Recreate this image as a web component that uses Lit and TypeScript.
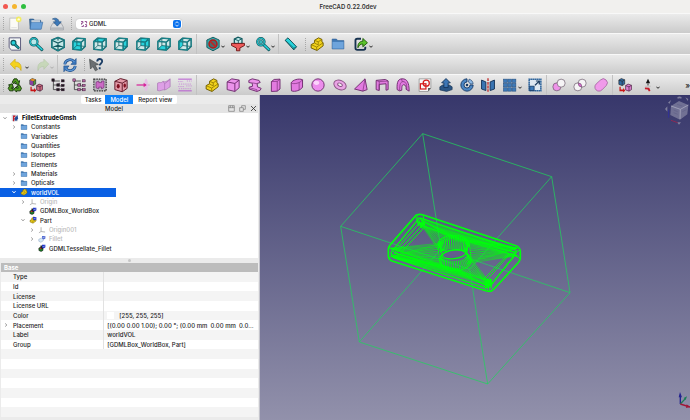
import { LitElement, html, svg, css, nothing } from "lit";
import { customElement, property } from "lit/decorators.js";
import { classMap } from "lit/directives/class-map.js";

type Pt = [number, number];

/* ---------- icon artwork, drawn on a 48 x 48 grid ---------- */

const TEAL = "#125a60";
const CYAN = "#27d3dc";
const PINK = "#ec92ea";
const PLUM = "#6d2a6d";

const cubeFaces: Record<string, string> = {
  front: "3,15 31,18 31,45 3,41",
  top: "3,15 17,4 45,6 31,18",
  right: "31,18 45,6 45,32 31,45",
  rear: "17,5 44,7 44,32 17,29",
  bottom: "3,41 17,29 45,32 31,45",
  left: "3,15 17,4 17,29 3,41",
};

const viewCube = (face: string) => svg`
  <polygon points="3,15 17,4 45,6 45,32 31,45 3,41" fill="#cfe8e8"/>
  <polygon points=${cubeFaces[face]} fill=${CYAN}/>
  <g fill="none" stroke=${TEAL} stroke-width="4.5" stroke-linejoin="round">
    <path d="M17 5v24L4 41M17 29l27 3" stroke-width="2.5"/>
    <path d="M4 15 17 5l27 2v25L31 44 4 41zM4 15l27 3 13-11M31 18v26"/>
  </g>
  <path d="M4 15 17 5l27 2v25L31 44 4 41zM4 15l27 3 13-11M31 18v26" fill="none" stroke="#1fa3ab" stroke-width="2"/>`;

const magnifier = svg`
  <path d="M26 26 43 42" stroke=${TEAL} stroke-width="10" stroke-linecap="round"/>
  <path d="M26 26 43 42" stroke=${CYAN} stroke-width="5" stroke-linecap="round"/>
  <circle cx="17" cy="17" r="12" fill="#b9e9ea" stroke=${TEAL} stroke-width="7"/>
  <circle cx="17" cy="17" r="12" fill="none" stroke=${CYAN} stroke-width="3"/>`;

const folder = svg`
  <path d="M5 8h14l4 5h20v27H5z" fill="#3f78b4" stroke="#2f5f95" stroke-width="2"/>
  <path d="M6 17h36v22H6z" fill="#6ea4dc"/>`;

const part = svg`
  <path d="M5 26 16 20v-8l13-8 11 5v8l4 3v10L24 45 5 37z" fill="#f2d21c" stroke="#6b5800" stroke-width="3" stroke-linejoin="round"/>
  <path d="M5 26l18 8 21-14M23 34v10M16 12l12 5 12-8M28 17v10l-12-6" fill="none" stroke="#8a7300" stroke-width="2.5"/>`;

const tree = (c: string) => svg`
  <path d="M9 11v28h14M9 24h14M30 11H9M28 17v10h10M28 39h10" fill="none" stroke="#333" stroke-width="2.5"/>
  <g fill=${c} stroke="#33132f" stroke-width="1.5"><rect x="4" y="4" width="8" height="8"/><rect x="20" y="20" width="8" height="8"/><rect x="35" y="7" width="9" height="7"/><rect x="35" y="22" width="9" height="7"/><rect x="20" y="35" width="8" height="8"/><rect x="35" y="36" width="9" height="7"/></g>`;

const miniBoxes = (a: string, b: string) => svg`
  <path d="M4 8l8-5 11 4v14l-8 5-11-4z" fill=${a} stroke="#222" stroke-width="2"/>
  <path d="M4 8l11 4 8-5M15 12v14" fill="none" stroke="#222" stroke-width="2"/>
  <path d="M26 26l8-5 11 4v14l-8 5-11-4z" fill=${b} stroke="#3a1030" stroke-width="2"/>
  <path d="M26 26l11 4 8-5M37 30v14" fill="none" stroke="#3a1030" stroke-width="2"/>
  <path d="M10 30v9h8v-5l7 8-7 6v-4H6V30z" fill="#c81414"/>`;

const icons: Record<string, unknown> = {
  file: svg`<path d="M7 5h28v38H7z" fill="#fbfbf6" stroke="#aaa" stroke-width="2"/><path d="M12 36h18" stroke="#ddd" stroke-width="3"/><circle cx="36" cy="9" r="9" fill="#f7ef3a" opacity=".75"/><circle cx="36" cy="9" r="4" fill="#fffde0"/>`,
  open: svg`<path d="M3 8h13l3 4h20v28H5z" fill="#3f74ac" stroke="#2c5580" stroke-width="2"/><path d="M9 12h28v20H9z" fill="#e9e9e9"/><path d="M8 18h38l-5 23H5z" fill="#6aa0d8" stroke="#3a6ca3" stroke-width="2"/>`,
  save: svg`<path d="M10 22h28l7 13v8H3v-8z" fill="#d9dbde" stroke="#8a8f96" stroke-width="2"/><path d="M4 35h40v7H4z" fill="#b4b8bd"/><path d="M9 8C18 2 30 6 30 17h8L25 31 12 17h8c0-5-4-8-11-9z" fill="#3b78b8" stroke="#234e80" stroke-width="2"/>`,
  fitall: svg`<path d="M5 4h37v40H13l-8-8z" fill="#f4f6f6" stroke="#557" stroke-width="3"/><path d="M24 26l11 10" stroke=${TEAL} stroke-width="9" stroke-linecap="round"/><circle cx="19" cy="20" r="8" fill=${CYAN} stroke=${TEAL} stroke-width="4"/><path d="M24 26l11 10" stroke="#17a0a8" stroke-width="4" stroke-linecap="round"/>`,
  fitsel: magnifier,
  iso: svg`<path d="M24 3 44 11v24L24 46 4 35V11z" fill="#c5e8e8" stroke=${TEAL} stroke-width="5" stroke-linejoin="round"/><path d="M4 12l20 9 20-9M24 21v24M24 3v10M24 28 5 35M24 28l20 7" fill="none" stroke=${TEAL} stroke-width="3.5"/><path d="M24 3 44 11v24L24 46 4 35V11z" fill="none" stroke="#1fa3ab" stroke-width="2"/>`,
  front: viewCube("front"),
  top: viewCube("top"),
  right: viewCube("right"),
  rear: viewCube("rear"),
  bottom: viewCube("bottom"),
  left: viewCube("left"),
  noclip: svg`<path d="M24 2 44 11v24L24 46 4 35V11z" fill="#3aa6a8" stroke=${TEAL} stroke-width="3"/><circle cx="24" cy="24" r="13" fill="#4c6a6c" stroke="#b41a1a" stroke-width="5"/><path d="M15 15l18 18" stroke="#c81e1e" stroke-width="5"/>`,
  filter: svg`<path d="M12 8l12-6 13 5v14l-12 5-13-5z" fill="#bfeaea" stroke=${TEAL} stroke-width="4"/><path d="M12 8l13 5 12-6M25 13v12" stroke=${TEAL} stroke-width="3" fill="none"/><path d="M3 22h42v7L30 37v9H19v-9L3 29z" fill="#ee5a5a" stroke="#6e1414" stroke-width="3"/>`,
  zoom: svg`${magnifier}<path d="M11 14l6-3 6 3v7l-6 3-6-3z" fill="#39b9bf" stroke=${TEAL} stroke-width="2"/>`,
  measure: svg`<path d="M5 12 14 4l28 29-9 10z" fill=${CYAN} stroke="#0b4a50" stroke-width="3" stroke-linejoin="round"/><path d="M5 12l28 25 9-4M33 37v6" fill="none" stroke="#0b4a50" stroke-width="2"/>`,
  part,
  folder,
  link: svg`<path d="M24 7H12q-6 0-6 6v24q0 6 6 6h20q6 0 6-6v-4" fill="none" stroke="#16324f" stroke-width="6"/><path d="M14 36C13 22 20 15 30 15V6l15 14-15 13v-9c-7 0-12 3-16 12z" fill="#5cc32c" stroke="#1f5b0a" stroke-width="3"/>`,
  undo: svg`<path d="M2 21 18 5v9c14 0 22 9 19 28-4-10-9-13-19-13v9z" fill="#f4d21e" stroke="#c9a50c" stroke-width="2"/>`,
  redo: svg`<path d="M46 21 30 5v9C16 14 8 23 11 42c4-10 9-13 19-13v9z" fill="#bfd6ac" stroke="#a5c092" stroke-width="2"/>`,
  refresh: svg`<g fill="none" stroke="#23528c" stroke-width="9"><path d="M7 22c2-17 23-20 31-8"/><path d="M41 27c-2 17-23 20-31 8"/></g><path d="M44 3v19H27zM4 46V27h17z" fill="#3a76bb" stroke="#23528c" stroke-width="2"/><g fill="none" stroke="#5c97d8" stroke-width="4"><path d="M7 22c2-17 23-20 31-8"/><path d="M41 27c-2 17-23 20-31 8"/></g>`,
  whats: svg`<path d="M3 5l29 17-11 3 8 14-7 4-8-14-8 8z" fill="#6b6f72" stroke="#3b3f42" stroke-width="2"/><path d="M28 13c0-11 16-11 16-1 0 7-8 7-8 14M36 31v7" fill="none" stroke="#1d3f66" stroke-width="6"/>`,
  recycle: svg`<g fill="#4f9a1d" stroke="#17370a" stroke-width="3" stroke-linejoin="round"><path d="M15 15 21 4h9l5 8 4-2-3 13-12-4 4-2-3-5-4 8z"/><path d="M38 23l7 12-4 8H29v4L20 38l9-9v5h6l-4-7z"/><path d="M18 43H7l-5-8 5-9-4-2 12-4 4 13-4-2-3 4h6z"/></g>`,
  assembly: svg`${miniBoxes("#4e9a3a", "#cf6f80")}<path d="M4 8l11 4v14L4 22z" fill="#8a3fa0"/><path d="M4 8l8-5 11 4-8 5z" fill="#e08a2a"/>`,
  treeA: tree("#1c1c1c"),
  treeB: tree("#b565a0"),
  bound: svg`<rect x="4" y="5" width="40" height="38" fill="#b9b9bf" stroke="#333" stroke-width="4" stroke-dasharray="5 3"/><path d="M11 15l9-4v5h9v-5h8v21l-8 5v-6h-9v6l-9-4z" fill="#cb6ac6" stroke=${PLUM} stroke-width="2"/>`,
  dice: svg`<path d="M4 12 22 3l22 6v26L28 46 4 39z" fill="#e39aa8" stroke="#5a1424" stroke-width="3"/><path d="M4 12l24 6L44 9M28 18v27" fill="none" stroke="#5a1424" stroke-width="3"/><ellipse cx="15" cy="28" rx="5" ry="7" fill="#7f0f1f"/><ellipse cx="36" cy="26" rx="4" ry="7" fill="#7f0f1f"/>`,
  beam: svg`<ellipse cx="34" cy="24" rx="6" ry="20" fill="#e6b6e6" opacity=".8"/><path d="M3 24h30" stroke="#d6249a" stroke-width="4"/><path d="M26 17l10 7-10 7z" fill="#d6249a"/><path d="M40 24h6" stroke="#e07ac0" stroke-width="2"/>`,
  sheet: svg`<path d="M3 18c8-5 12 2 18-6 6 5 16-3 23-8v26c-6 2-10 9-18 10-6-3-14 6-23 2z" fill="#dd9fe6" stroke="#a26fae" stroke-width="2"/><path d="M21 12l5 8v20M26 20 44 6" stroke="#a26fae" stroke-width="2" fill="none"/>`,
  lines: svg`<path d="M2 5h44M2 43h44" stroke="#b54fd0" stroke-width="3"/><g stroke="#c98ad8" stroke-width="3" stroke-dasharray="4 3"><path d="M2 13h16M30 11h16M4 21h40M2 29h20M28 27h18M4 36h40"/></g>`,
  box: svg`<path d="M5 14 20 4l24 4v25L30 45 5 39z" fill=${PINK} stroke=${PLUM} stroke-width="3"/><path d="M5 14l25 5L44 8M30 19v26" fill="none" stroke=${PLUM} stroke-width="3"/>`,
  beamI: svg`<path d="M4 9 15 4l22 5 4 7-10 3 1 11 12 5-3 6-11 4-25-8v-6l11-3-1-10-11-2z" fill=${PINK} stroke=${PLUM} stroke-width="3" stroke-linejoin="round"/><path d="M15 17l16 3M6 33l24 6v6" stroke=${PLUM} stroke-width="2" fill="none"/>`,
  prism: svg`<path d="M9 13 18 6l19-1v32l-9 7-19 1z" fill="#e27ae0" stroke=${PLUM} stroke-width="3"/><path d="M9 13l19-1 9-7M28 12v32" fill="none" stroke=${PLUM} stroke-width="2"/>`,
  tube: svg`<path d="M5 17C9 8 30 1 42 7v24C37 40 18 48 6 43z" fill="#e27ae0" stroke=${PLUM} stroke-width="3"/><path d="M5 17c8 6 30 1 37-10M31 16v25" fill="none" stroke=${PLUM} stroke-width="2"/>`,
  sphere: svg`<circle cx="24" cy="24" r="20" fill="#ec8cec" stroke=${PLUM} stroke-width="3"/><ellipse cx="19" cy="17" rx="9" ry="7" fill="#fbd3fb"/>`,
  torus: svg`<ellipse cx="24" cy="24" rx="21" ry="15" transform="rotate(25 24 24)" fill="#e9a3e4" stroke="#8a5285" stroke-width="3"/><ellipse cx="24" cy="23" rx="8" ry="5" transform="rotate(25 24 23)" fill="#eee" stroke="#8a5285" stroke-width="3"/>`,
  tetra: svg`<path d="M3 37 37 4l7 35-14 5z" fill="#e27ae0" stroke=${PLUM} stroke-width="3" stroke-linejoin="round"/><path d="M37 4l-7 40" stroke=${PLUM} stroke-width="2"/>`,
  trap: svg`<path d="M5 9l30-3 9 5v28l-7 2V20l-22 2v20l-10-3z" fill="#e27ae0" stroke=${PLUM} stroke-width="3" stroke-linejoin="round"/><path d="M5 9l10 4 29-2M15 13v27" fill="none" stroke=${PLUM} stroke-width="2"/>`,
  arch: svg`<path d="M5 39C3 12 10 4 21 4c16-1 23 12 23 40l-10-6c1-9-2-14-7-15-6 0-7 5-7 18l-7 2z" fill="#e27ae0" stroke=${PLUM} stroke-width="3" stroke-linejoin="round"/><path d="M13 42c0-22 3-29 12-29 10 1 12 12 11 25M21 4c-4 3 0 6 4 10" fill="none" stroke=${PLUM} stroke-width="2"/>`,
  sketch: svg`<path d="M5 4h38v30L34 45H5z" fill="#f8f8f8" stroke="#777" stroke-width="2"/><path d="M34 45V34h9z" fill="#555"/><g fill="none" stroke="#d41c1c" stroke-width="4"><rect x="9" y="20" width="18" height="17"/><circle cx="28" cy="18" r="10"/></g>`,
  pad: svg`<path d="M4 30l9-6h22l9 6v9l-18 6L4 40z" fill="#2a5585" stroke="#122c4b" stroke-width="2"/><path d="M24 3l14 14h-7v15H17V17h-7z" fill="#3d76b5" stroke="#16365c" stroke-width="3"/>`,
  revolve: svg`<path d="M24 4a20 20 0 1 0 20 20H34a10 10 0 1 1-10-10z" fill="#4b86c4" stroke="#163a66" stroke-width="3"/><path d="M31 5c8 2 12 8 13 15l-10 1c0-3-2-6-6-7z" fill="#8db8e4" stroke="#163a66" stroke-width="2"/><circle cx="24" cy="24" r="4" fill="#163a66"/>`,
  mirror: svg`<path d="M3 8l14 6v28L3 37zM45 8l-14 6v28l14-5z" fill="#3974b2" stroke="#143258" stroke-width="3"/><path d="M24 2v44" stroke="#c01c1c" stroke-width="4" stroke-dasharray="9 3"/>`,
  array: svg`<g fill="#3d7ab9" stroke="#2a5484" stroke-width="2"><rect x="3" y="5" width="12" height="11"/><rect x="17" y="5" width="12" height="11"/><rect x="31" y="5" width="12" height="11"/><rect x="3" y="19" width="12" height="11"/><rect x="17" y="19" width="12" height="11"/><rect x="31" y="19" width="12" height="11"/><rect x="3" y="33" width="12" height="11"/><rect x="17" y="33" width="12" height="11"/><rect x="31" y="33" width="12" height="11"/></g>`,
  scale: svg`<rect x="5" y="5" width="38" height="38" fill="#dfe8f1" stroke="#2f659c" stroke-width="5" stroke-dasharray="5 1"/><rect x="7" y="28" width="14" height="14" fill="#3d7ab9" stroke="#1f4470" stroke-width="3"/><path d="M24 25 36 13M27 11h11v11" stroke="#1b3a5e" stroke-width="4" fill="none"/>`,
  cut: svg`<circle cx="17" cy="30" r="13" fill="#ee93e8" stroke="#5b4a5b" stroke-width="2"/><circle cx="31" cy="18" r="13" fill="#f6f4f6" stroke="#5b4a5b" stroke-width="2"/>`,
  common: svg`<circle cx="17" cy="30" r="13" fill="#f6f4f6"/><circle cx="31" cy="18" r="13" fill="#f6f4f6"/><path d="M18 17a13 13 0 0 1 12 14A13 13 0 0 1 18 17z" fill="#e56fdc"/><circle cx="17" cy="30" r="13" fill="none" stroke="#5b4a5b" stroke-width="2"/><circle cx="31" cy="18" r="13" fill="none" stroke="#5b4a5b" stroke-width="2"/>`,
  fuse: svg`<path d="M8 21 22 8a13 13 0 0 1 19 18L27 40A13 13 0 0 1 8 21z" fill="#f09aea" stroke="#8b4d88" stroke-width="2"/>`,
  convert: miniBoxes("#2f6aa3", "#dd7fd0"),
  axes: svg`<path d="M24 4l7 14H17z" fill="#161616"/><path d="M22 18h4v8h-4z" fill="#555"/><path d="M15 28h18" stroke="#aaa" stroke-width="2"/><path d="M14 32l14 1 4 10-5 2-4-6-9-1z" fill="#c41c2a"/>`,
  grid4: svg`<g fill="none" stroke="#8a3f88" stroke-width="6"><path d="M5 8h12v10H8v10M29 8h12v12M8 40h12V30M31 28h10v13H29"/></g>`,
  doc: svg`<path d="M6 6h34v36H6z" fill="#f5f5f5" stroke="#8893a8" stroke-width="3"/><path d="M11 8h16v9H19v8h7v8h-7v12h-8z" fill="#c4202d"/><path d="M24 20l16-14 4 22-12 16-10-6z" fill="#1f4c96"/>`,
  origin: svg`<path d="M18 6v28l-14 8M18 34l26 3" fill="none" stroke="#8b8b8b" stroke-width="5"/>`,
  gdml: svg`<path d="M4 24l14-5 12 5v16L18 46 4 40z" fill="#1b8a2a" stroke="#111" stroke-width="4"/><path d="M14 8h16v22H14z" fill="#222"/><path d="M24 3h22v16L35 27l-11-6z" fill="#2238c9"/><path d="M29 12l5 5 9-9" stroke="#fff" stroke-width="3" fill="none"/><path d="M8 26l8-3 6 6-8 5z" fill="#c02a2a"/>`,
  partTick: svg`${part}<path d="M24 4h22v16L35 27l-11-6z" fill="#2238c9"/><path d="M29 12l5 5 9-9" stroke="#fff" stroke-width="3" fill="none"/>`,
  fillet: svg`<path d="M3 26l17-8 12 6v12L16 45 3 38z" fill="#cfe2f4" stroke="#86a3c4" stroke-width="4"/><path d="M24 4h22v16L35 27l-11-6z" fill="#2b49c9"/><path d="M29 12l5 5 9-9" stroke="#fff" stroke-width="3" fill="none"/>`,
};

@customElement("cad-icon")
export class CadIcon extends LitElement {
  @property() name = "";

  static styles = css`
    :host { display: block; flex: none; width: 16px; height: 16px; }
    svg { display: block; width: 100%; height: 100%; }
  `;

  render() {
    return html`<svg viewBox="-2 -2 52 52" fill="none" aria-hidden="true">${icons[this.name] ?? nothing}</svg>`;
  }
}

/* ---------- toolbars ---------- */

interface Tool { icon: string; label: string; menu?: boolean; off?: boolean }
const t = (icon: string, label: string): Tool => ({ icon, label });
const m = (icon: string, label: string, off = false): Tool => ({ icon, label, menu: true, off });

const fileTools = [t("file", "New"), t("open", "Open"), t("save", "Save")];
const viewTools = [
  t("fitall", "Fit all"), t("fitsel", "Fit selection"), t("iso", "Isometric"), t("front", "Front"), t("top", "Top"),
  t("right", "Right"), t("rear", "Rear"), t("bottom", "Bottom"), t("left", "Left"),
];
const displayTools = [m("noclip", "Draw style"), m("filter", "Selection filter"), m("zoom", "Zoom")];
const gdmlTools = [
  t("recycle", "Cycle"), t("assembly", "Expand"), t("treeA", "Expand one"), t("treeB", "Expand max"), t("bound", "Bounding box"),
  t("dice", "Tessellate"), t("beam", "Border surface"), t("sheet", "Skin surface"), t("lines", "Optical"),
];
const solidTools = [
  t("part", "Part"), t("box", "Box"), t("beamI", "Extrusion"), t("prism", "Elliptical tube"), t("tube", "Tube"),
  t("sphere", "Sphere"), t("torus", "Torus"), t("tetra", "Tetrahedron"), t("trap", "Trapezoid"), t("arch", "Polycone"),
  t("sketch", "Sketch"), t("pad", "Extrude"), t("revolve", "Revolve"), t("mirror", "Mirror"), m("array", "Array"), t("scale", "Scale"),
];
const boolTools = [t("cut", "Cut"), t("common", "Intersection"), t("fuse", "Union")];

/* ---------- model tree and properties ---------- */

interface Node { label: string; icon: string; level: number; arrow?: "open" | "closed"; bold?: boolean; dim?: boolean; selected?: boolean }

const nodes: Node[] = [
  { label: "FilletExtrudeGmsh", icon: "doc", level: 0, arrow: "open", bold: true },
  { label: "Constants", icon: "folder", level: 1, arrow: "closed" },
  { label: "Variables", icon: "folder", level: 1 },
  { label: "Quantities", icon: "folder", level: 1 },
  { label: "Isotopes", icon: "folder", level: 1 },
  { label: "Elements", icon: "folder", level: 1 },
  { label: "Materials", icon: "folder", level: 1, arrow: "closed" },
  { label: "Opticals", icon: "folder", level: 1, arrow: "closed" },
  { label: "worldVOL", icon: "part", level: 1, arrow: "open", selected: true },
  { label: "Origin", icon: "origin", level: 2, arrow: "closed", dim: true },
  { label: "GDMLBox_WorldBox", icon: "gdml", level: 2 },
  { label: "Part", icon: "partTick", level: 2, arrow: "open" },
  { label: "Origin001", icon: "origin", level: 3, arrow: "closed", dim: true },
  { label: "Fillet", icon: "fillet", level: 3, arrow: "closed", dim: true },
  { label: "GDMLTessellate_Fillet", icon: "gdml", level: 3 },
];

const EMPTY = "\u00a0";
const properties: [string, string][] = [
  ["Type", EMPTY], ["Id", EMPTY], ["License", EMPTY], ["License URL", EMPTY],
  ["Color", "[255, 255, 255]"],
  ["Placement", "[(0.00 0.00 1.00); 0.00 °; (0.00 mm  0.00 mm  0.0..."],
  ["Label", "worldVOL"],
  ["Group", "[GDMLBox_WorldBox, Part]"],
];
const fillerRows = 7;

/* ---------- wireframe ---------- */

const seg = (a: Pt, b: Pt) => `M${a[0].toFixed(1)} ${a[1].toFixed(1)}L${b[0].toFixed(1)} ${b[1].toFixed(1)}`;
const lerp = (a: Pt, b: Pt, k: number): Pt => [a[0] + (b[0] - a[0]) * k, a[1] + (b[1] - a[1]) * k];
const onRing = (deg: number, cx = 223, cy = 145, rx = 50, ry = 46): Pt => {
  const r = (deg * Math.PI) / 180;
  return [cx + rx * Math.cos(r), cy + ry * Math.sin(r)];
};

/* Triangulation lines run from each plate corner to the rim of the bore. */
const fan = (from: Pt[], start: number, end: number, step: number) => {
  let d = "";
  from.forEach((p) => {
    for (let a = start; a <= end; a += step) d += seg(p, onRing(a));
  });
  return d;
};
const band = (apex: Pt, a: Pt, b: Pt, n: number) => {
  let d = "";
  for (let i = 0; i <= n; i++) d += seg(apex, lerp(a, b, i / n));
  return d;
};
const meshLines =
  fan([[122, 44], [124, 60]], 195, 300, 9) +
  fan([[412, 130], [412, 152]], -75, 50, 9) +
  fan([[325, 228], [322, 244]], 15, 120, 9) +
  fan([[32, 130], [34, 154]], 105, 230, 9);
const bandLines =
  band([410, 130], [130, 46], [205, 100], 14) +
  band([405, 142], [140, 56], [215, 100], 10) +
  band([38, 156], [318, 240], [240, 192], 14) +
  band([44, 144], [300, 232], [230, 192], 10);

const boreTicks = () => {
  let d = "";
  for (let a = 0; a < 360; a += 9) {
    d += seg(onRing(a, 221, 116, 47, 25), onRing(a, 221, 126, 41, 17));
    d += seg(onRing(a, 226, 166, 48, 32), onRing(a, 222, 152, 38, 16));
  }
  for (let a = 0; a <= 180; a += 9) d += seg(onRing(a + 180, 221, 120, 44, 20), onRing(a + 180, 222, 146, 38, 14));
  return d;
};

@customElement("cad-viewport")
export class CadViewport extends LitElement {
  static styles = css`
    :host { display: block; position: relative; overflow: hidden; background: linear-gradient(#37376b, #9291ab); }
    .scene { display: block; width: 100%; height: 100%; }
    .cube { position: absolute; top: 0; right: 0; width: 25px; height: 30px; }
    .axes { position: absolute; bottom: 10px; right: 0; width: 12px; height: 20px; }
  `;

  render() {
    return html`
      <svg class="scene" viewBox="260 95 430 325" role="img" aria-label="World box with filleted plate">
        <g transform="translate(330 125) scale(.33333)" fill="none" stroke="#1fd45c" stroke-width="2.6" opacity=".85">
          <path d="M278 26 665 155 720 503 473 777 88 651 32 304zM278 26 333 372 88 651M333 372 720 503M665 155 419 433 32 304M419 433 473 777"/>
        </g>
        <g transform="translate(380 205) scale(.33333)" fill="none" stroke="#00ff0c" stroke-linejoin="round">
          <path d=${meshLines} stroke-width="2" opacity=".75"/>
          <path d=${bandLines} stroke-width="2" opacity=".6"/>
          <path d="M108 31Q118 26 130 30L408 122Q421 127 421 140V160Q420 168 414 174L342 252Q334 262 320 258L36 168Q24 162 25 150V134Q25 126 31 119z" stroke-width="5"/>
          <path d="M120 39 404 133Q411 137 407 146L332 242Q325 250 314 247L40 158Q31 153 35 140L112 46Q116 39 120 39z" stroke-width="4"/>
          <path d="M48 146 128 60M58 148 134 66M42 142 120 52M392 144 318 228M402 156 328 244M384 148 308 226M108 36 116 64M130 32 134 62M112 34 126 70M28 126 50 148M26 160 50 140M420 134 396 150M420 160 392 144M318 256 316 226M334 252 334 222M326 258 324 220" stroke-width="3"/>
          <path d="M114 50 134 54 124 70zM314 226 334 222 332 244 316 244z" fill="#00ff0c" stroke-width="2"/>
          <ellipse cx="222" cy="148" rx="36" ry="16" fill="#5f5d8a" stroke="none"/>
          <path d=${boreTicks()} stroke-width="3"/>
          <g stroke-width="3">
            <ellipse cx="221" cy="116" rx="47" ry="25" opacity=".8"/>
            <path d="M174 116 178 168M268 116 274 168"/>
            <ellipse cx="222" cy="148" rx="35" ry="13" transform="rotate(-7 222 148)" fill="#625f8c" stroke-width="4"/>
            <ellipse cx="226" cy="166" rx="48" ry="32" opacity=".8"/>
          </g>
        </g>
      </svg>
      <svg class="cube" viewBox="0 0 75 90" aria-hidden="true">
        <g fill="#8b8ba6" opacity=".85">
          <path d="M18 33 42 18 70 30 67 58 45 74 16 60z" opacity=".8"/>
          <path d="M37 7q6-5 13 0l-1 4q-5-3-11 0zM7 34l-7 8 7 8zM18 15l-9 8 5 3zM61 7l9 5-2 6zM36 82h12l-6 7z"/>
        </g>
        <path d="M18 33 46 43 70 30M46 43 45 72" stroke="#b5b5c8" stroke-width="2" fill="none"/>
        <path d="M26 45l12 5M26 53l12 5M52 50l12-6M36 28l16 5" stroke="#66668c" stroke-width="3"/>
        <path d="M11 44v24" stroke="#2b2bb0" stroke-width="2"/><path d="M18 76l20 7" stroke="#8a2a55" stroke-width="3"/>
      </svg>
      <svg class="axes" viewBox="0 0 36 60" fill="none" aria-hidden="true">
        <path d="M7 42V14" stroke="#23238f" stroke-width="4"/><path d="M2 22 6 6l6 16z" fill="#23238f"/>
        <path d="M7 42 22 26" stroke="#1c7d57" stroke-width="4"/><path d="M17 24l10-5-4 11z" fill="#1c7d57"/>
        <path d="M7 42 36 51" stroke="#a01838" stroke-width="4"/><path d="M26 43l10 8-12 3z" fill="#a01838"/>
      </svg>`;
  }
}

@customElement("app-root")
export class AppRoot extends LitElement {
  static styles = css`
    :host {
      display: flex; flex-direction: column; height: 100vh; overflow: hidden;
      background: #ececec; color: #1c1c1c;
      font: 500 6px/9px Inter, "Liberation Sans", sans-serif;
    }
    button, select { font: inherit; color: inherit; border: 0; margin: 0; padding: 0; background: none; }

    .titlebar { display: grid; grid-template-columns: 1fr auto 1fr; align-items: center; flex: none; height: 13px; background: #f1f0ee; }
    .titlebar h1 { margin: 0; padding-left: 6px; font: 600 6px/9px Inter, "Liberation Sans", sans-serif; color: #333; }
    .lights { display: flex; gap: 4px; padding-left: 3px; }
    .light { width: 5px; height: 5px; border-radius: 50%; }
    .close { background: #f2584f; }
    .min { background: #f5b52e; }
    .max { background: #2fbf3f; }

    .toolbar {
      display: flex; align-items: center; flex: none; height: 20px; box-sizing: border-box;
      border-top: 1px solid #f8f8f8; background: linear-gradient(#ebebeb, #cbcbcb);
    }
    .toolbar.tall { height: 21px; }
    .handle { flex: none; width: 3px; height: 13px; margin: 0 2px 0 5px; background: repeating-linear-gradient(#a8a8a8 0 1px, transparent 1px 2px) 1px 0 / 1px 100% no-repeat; }
    .handle:first-child { margin-left: 2px; }
    .sep { flex: none; align-self: stretch; width: 1px; margin: 0 4px 0 3px; background: #c2c2c2; }
    .group { display: flex; flex: none; justify-content: space-between; align-items: center; }
    .nine { width: 186px; }
    .three { width: 58px; }
    .menus { width: 70px; margin-left: 4px; }
    .history { width: 45px; margin-left: 2px; }
    .solids { width: 339px; margin-left: 3px; }
    .pair { width: 37px; }
    .tail { width: 43px; }
    .last { margin-left: 7px; }
    .tool { display: flex; align-items: flex-end; }
    .chev { flex: none; width: 4px; height: 3px; margin-bottom: 4px; }
    .off { opacity: 0.7; }
    .more { margin-left: auto; font-size: 8px; }

    .picker { position: relative; width: 106px; margin-left: 1px; }
    .picker select {
      display: block; width: 100%; height: 10px; padding-left: 13px; appearance: none;
      border-radius: 3px; background: #fff; box-shadow: 0 0 1px #999;
    }
    .picker cad-icon { position: absolute; left: 4px; top: 1px; width: 8px; height: 8px; }
    .picker .updown { position: absolute; right: 1px; top: 1px; width: 8px; height: 8px; pointer-events: none; }

    .body { display: grid; grid-template-columns: minmax(0, 26fr) minmax(0, 43fr); flex: 1; min-height: 0; }
    .dock { display: flex; flex-direction: column; min-height: 0; min-width: 0; box-sizing: border-box; padding-right: 1px; background: #ebebeb; border-right: 1px solid #c4c4cc; }
    .tabs { display: flex; justify-content: center; flex: none; }
    .tab { padding: 0 4px; height: 9px; background: #fff; }
    .tab:first-child { border-radius: 2px 0 0 2px; }
    .tab:last-child { border-radius: 0 2px 2px 0; padding: 0 5px; }
    .tab.on { padding: 0 5px; background: #0a80fb; color: #fff; }
    .docktitle { display: grid; grid-template-columns: 1fr auto; align-items: center; flex: none; height: 9px; background: #e4e4e4; }
    .docktitle h2 { margin: 0; font: inherit; text-align: center; }
    .docktitle div { display: flex; gap: 4px; padding-right: 1px; }
    .docktitle button, .docktitle svg { display: block; width: 7px; height: 7px; }

    .tree { display: grid; grid-template-rows: repeat(15, 1fr); flex: 10 1 0; min-height: 0; margin: 0; padding: 0 0 5px; list-style: none; background: #fff; }
    .node { display: flex; align-items: center; width: 45%; box-sizing: border-box; padding-left: 2px; white-space: nowrap; }
    .l1 { padding-left: 11px; }
    .l2 { padding-left: 20px; }
    .l3 { padding-left: 29px; }
    .arrow { flex: none; width: 6px; height: 6px; margin-right: 3px; color: #9c9c9c; }
    .node cad-icon { width: 8px; height: 8px; margin-right: 3px; }
    .bold { font-weight: 700; color: #000; }
    .dim { color: #b9b9b9; }
    .dim cad-icon { opacity: 0.8; }
    .selected, .selected .arrow { color: #fff; }
    .selected { background: #0a60e4; }

    .splitter { display: grid; place-items: center; flex: none; height: 5px; }
    .splitter i { width: 3px; height: 3px; border-radius: 50%; background: #c6c6c6; }
    .props { display: flex; flex: 11 1 0; min-height: 0; margin: 0 0 3px 1px; overflow: hidden; }
    table { width: 100%; height: 100%; table-layout: fixed; border-collapse: collapse; }
    .namecol { width: 40%; }
    th, td { padding: 0; text-align: left; font-weight: 500; line-height: 9px; white-space: pre; overflow: hidden; }
    thead th { padding-left: 3px; background: #bcbcbc; color: #fff; font-weight: 700; }
    tbody tr { background: #fff; }
    tbody tr:nth-child(odd) { background: #f4f4f4; }
    tbody th { position: relative; padding-left: 12px; border-right: 1px solid #e2e2e2; }
    tbody .filler th { border-right: 0; }
    tbody td { padding-left: 3px; }
    .expander { position: absolute; left: 2px; top: 2px; width: 6px; height: 6px; color: #999; }
    .value { display: flex; align-items: center; gap: 5px; }
    .swatch { width: 7px; height: 7px; background: #fff; }
  `;

  private tool(x: Tool) {
    return html`<button class=${classMap({ tool: true, off: !!x.off })} type="button" aria-label=${x.label} title=${x.label}>
      <cad-icon name=${x.icon}></cad-icon>
      ${x.menu ? html`<svg class="chev" viewBox="0 0 12 9" fill="none" aria-hidden="true"><path d="M1 2l5 5 5-5" stroke=${x.off ? "#999" : "#222"} stroke-width="3"/></svg>` : nothing}
    </button>`;
  }

  private group(kind: string, tools: Tool[]) {
    return html`<div class="group ${kind}">${tools.map((x) => this.tool(x))}</div>`;
  }

  private arrow(kind: string | undefined, cls = "arrow") {
    return html`<svg class=${cls} viewBox="0 0 18 18" fill="none" aria-hidden="true">
      ${kind === "open" ? svg`<path d="M4 6l5 6 5-6" stroke="currentColor" stroke-width="2.5"/>` : nothing}
      ${kind === "closed" ? svg`<path d="M6 4l6 5-6 5" stroke="currentColor" stroke-width="2.5"/>` : nothing}
    </svg>`;
  }

  render() {
    const handle = html`<span class="handle"></span>`;
    const sep = html`<span class="sep"></span>`;
    return html`
      <header class="titlebar">
        <div class="lights"><span class="light close"></span><span class="light min"></span><span class="light max"></span></div>
        <h1>FreeCAD 0.22.0dev</h1>
      </header>

      <div class="toolbar">
        ${handle}${this.group("three", fileTools)}${handle}
        <div class="picker">
          <select aria-label="Workbench"><option>GDML</option></select>
          <cad-icon name="grid4"></cad-icon>
          <svg class="updown" viewBox="0 0 24 24" fill="none" aria-hidden="true"><rect width="24" height="24" rx="6" fill="#0a72ee"/><path d="M7 10l5-5 5 5M7 14l5 5 5-5" stroke="#fff" stroke-width="2.5"/></svg>
        </div>
      </div>
      <div class="toolbar tall">
        ${handle}${this.group("nine", viewTools)}${sep}${this.group("menus", displayTools)}${sep}
        ${this.tool(t("measure", "Measure"))}${handle}${this.group("pair", [t("part", "Create part"), t("folder", "Create group")])}
        <div class="group last">${this.tool(m("link", "Make link"))}</div>
      </div>
      <div class="toolbar">
        ${handle}${this.group("history", [m("undo", "Undo"), m("redo", "Redo", true)])}${sep}
        ${this.tool(t("refresh", "Refresh"))}${handle}${this.tool(t("whats", "What's this?"))}
      </div>
      <div class="toolbar tall">
        ${handle}${this.group("nine", gdmlTools)}${sep}${this.group("solids", solidTools)}${sep}
        ${this.group("three", boolTools)}${sep}${this.group("tail", [t("convert", "Convert"), m("axes", "Axes")])}
        <button class="more" type="button" aria-label="More tools">»</button>
      </div>

      <main class="body">
        <section class="dock">
          <div class="tabs" role="tablist">
            <button class="tab" role="tab" type="button">Tasks</button>
            <button class="tab on" role="tab" type="button" aria-selected="true">Model</button>
            <button class="tab" role="tab" type="button">Report view</button>
          </div>
          <div class="docktitle">
            <h2>Model</h2>
            <div>
              <button type="button" aria-label="Overlay"><svg viewBox="0 0 21 21" fill="none" stroke="#777" stroke-width="2"><path d="M2 2h17v17H2zM2 8h17M7 2v6M14 2v6"/></svg></button>
              <button type="button" aria-label="Float"><svg viewBox="0 0 21 21" fill="none" stroke="#777" stroke-width="2"><path d="M2 8h11v11H2zM8 8V2h11v11h-6"/></svg></button>
              <button type="button" aria-label="Close"><svg viewBox="0 0 21 21" fill="none" stroke="#333" stroke-width="2.5"><path d="M3 3l15 15M18 3 3 18"/></svg></button>
            </div>
          </div>
          <ul class="tree" role="tree">
            ${nodes.map((n) => html`<li role="treeitem" aria-level=${n.level + 1}
              class=${classMap({ node: true, [`l${n.level}`]: true, bold: !!n.bold, dim: !!n.dim, selected: !!n.selected })}>
              ${this.arrow(n.arrow)}<cad-icon name=${n.icon}></cad-icon><span>${n.label}</span></li>`)}
          </ul>
          <div class="splitter"><i></i></div>
          <div class="props">
            <table>
              <colgroup><col class="namecol"><col></colgroup>
              <thead><tr><th colspan="2">Base</th></tr></thead>
              <tbody>
                ${properties.map(([k, v]) => html`<tr>
                  <th scope="row">${k === "Placement" ? this.arrow("closed", "expander") : nothing}${k}</th>
                  <td>${k === "Color" ? html`<div class="value"><span class="swatch"></span>${v}</div>` : v}</td></tr>`)}
                ${Array.from({ length: fillerRows }, () => html`<tr class="filler"><th>${EMPTY}</th><td>${EMPTY}</td></tr>`)}
              </tbody>
            </table>
          </div>
        </section>
        <cad-viewport></cad-viewport>
      </main>`;
  }
}
